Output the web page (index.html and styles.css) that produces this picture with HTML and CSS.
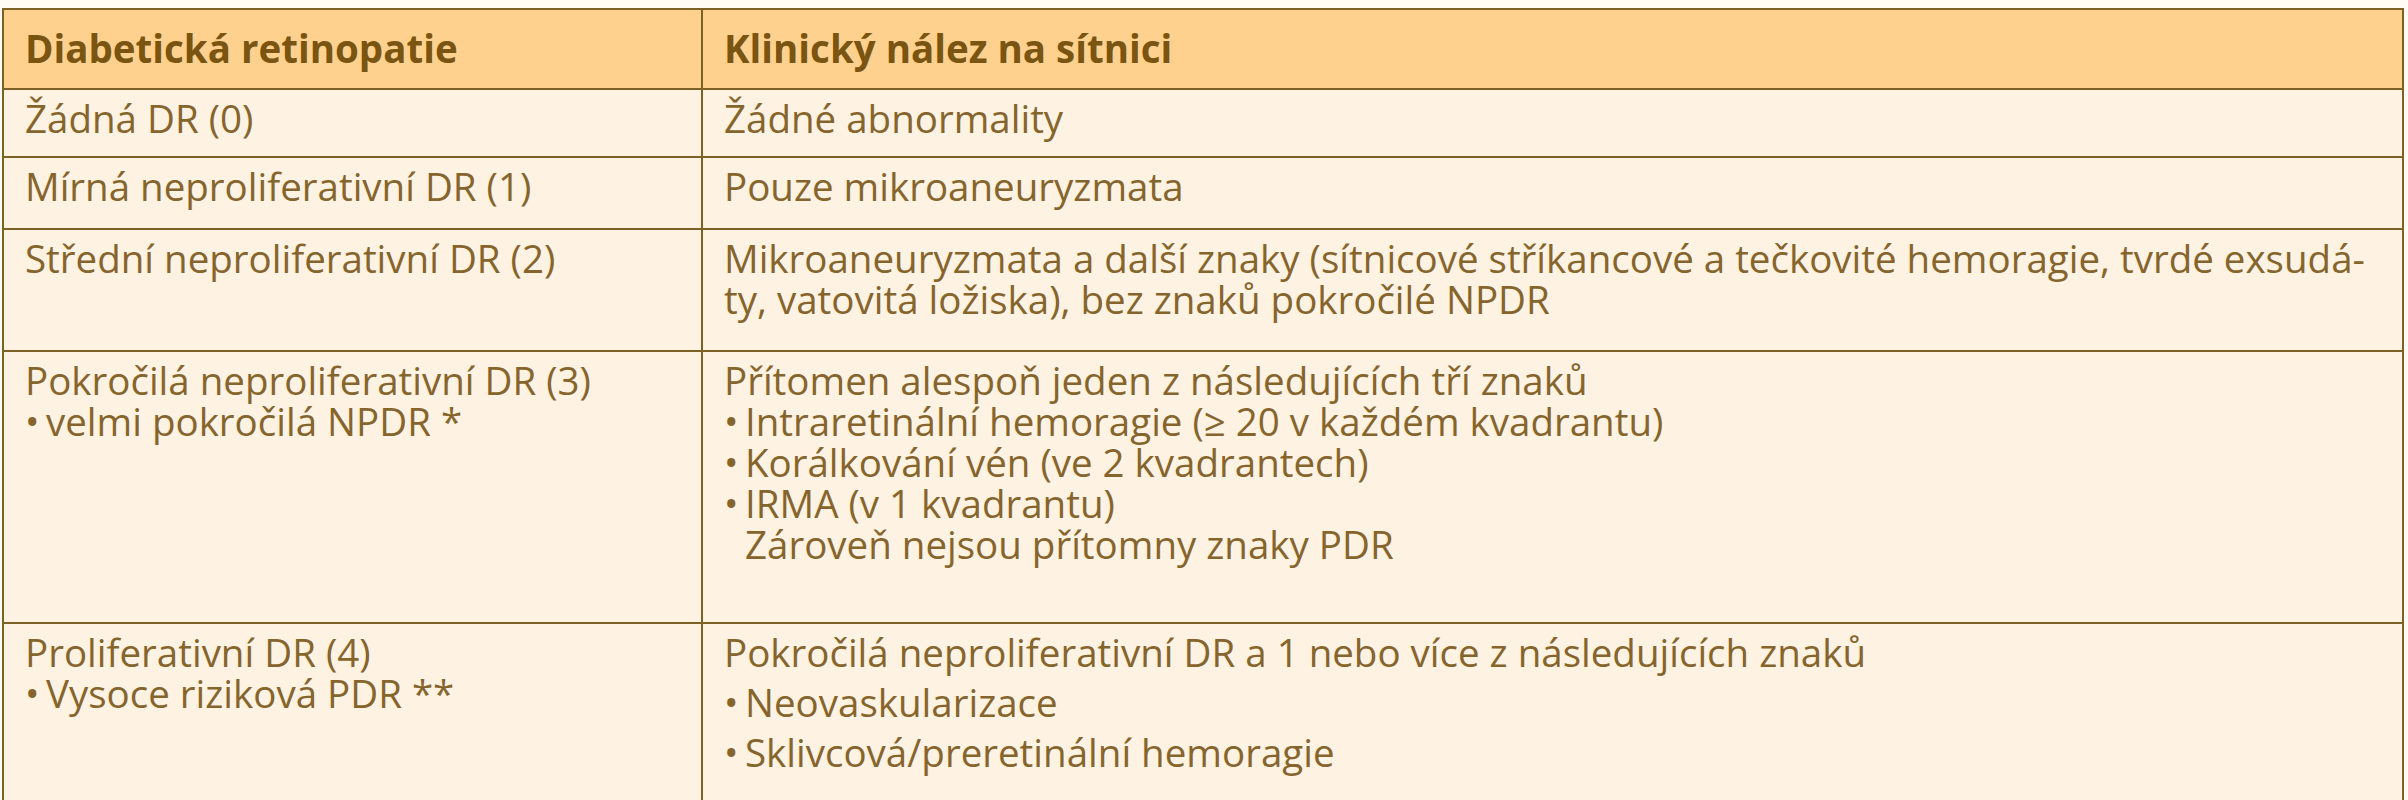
FILE: index.html
```html
<!DOCTYPE html>
<html lang="cs">
<head>
<meta charset="utf-8">
<title>Diabetická retinopatie</title>
<link rel="stylesheet" href="styles.css">
</head>
<body>
<table class="dr-table">
  <colgroup>
    <col class="col-a">
    <col class="col-b">
  </colgroup>
  <thead>
    <tr class="row-head">
      <th>Diabetická retinopatie</th>
      <th>Klinický nález na sítnici</th>
    </tr>
  </thead>
  <tbody>
    <tr class="row-r1">
      <td>Žádná DR (0)</td>
      <td>Žádné abnormality</td>
    </tr>
    <tr class="row-r2">
      <td>Mírná neproliferativní DR (1)</td>
      <td>Pouze mikroaneuryzmata</td>
    </tr>
    <tr class="row-r3">
      <td>Střední neproliferativní DR (2)</td>
      <td>
        <div class="line">Mikroaneuryzmata a další znaky (sítnicové stříkancové a tečkovité hemoragie, tvrdé exsudá-</div>
        <div class="line">ty, vatovitá ložiska), bez znaků pokročilé NPDR</div>
      </td>
    </tr>
    <tr class="row-r4">
      <td>
        <div class="line">Pokročilá neproliferativní DR (3)</div>
        <div class="line"><span class="dot">•</span>velmi pokročilá NPDR *</div>
      </td>
      <td>
        <div class="line">Přítomen alespoň jeden z následujících tří znaků</div>
        <div class="line"><span class="dot">•</span>Intraretinální hemoragie (≥ 20 v každém kvadrantu)</div>
        <div class="line"><span class="dot">•</span>Korálkování vén (ve 2 kvadrantech)</div>
        <div class="line"><span class="dot">•</span>IRMA (v 1 kvadrantu)</div>
        <div class="line cont">Zároveň nejsou přítomny znaky PDR</div>
      </td>
    </tr>
    <tr class="row-r5">
      <td>
        <div class="line">Proliferativní DR (4)</div>
        <div class="line"><span class="dot">•</span>Vysoce riziková PDR **</div>
      </td>
      <td>
        <div class="line">Pokročilá neproliferativní DR a 1 nebo více z následujících znaků</div>
        <div class="line spaced"><span class="dot">•</span>Neovaskularizace</div>
        <div class="line spaced"><span class="dot">•</span>Sklivcová/preretinální hemoragie</div>
      </td>
    </tr>
  </tbody>
</table>
</body>
</html>
```

FILE: styles.css
```css
html, body {
  margin: 0;
  padding: 0;
  background: #fffcf6;
}

body {
  padding: 8px 0 0 2px;
  font-family: "Open Sans", "Noto Sans", "DejaVu Sans", sans-serif;
  font-size: 38.5px;
  line-height: 41px;
  color: #86652d;
}

.dr-table {
  border-collapse: separate;
  border-spacing: 0;
  width: 2402px;
  table-layout: fixed;
  border-top: 2px solid #7d6226;
  border-left: 2px solid #7d6226;
  background: #fef2e2;
}

.col-a { width: 699px; }
.col-b { width: 1701px; }

.dr-table th,
.dr-table td {
  box-sizing: border-box;
  border-right: 2px solid #7d6226;
  border-bottom: 2px solid #7d6226;
  padding: 8px 20px 0 21px;
  text-align: left;
  vertical-align: top;
  white-space: nowrap;
}

.dr-table th {
  background: #fed28e;
  color: #7a5411;
  font-weight: 700;
  padding-top: 18px;
  height: 80px;
}

.row-r1 td { height: 68px; }
.row-r2 td { height: 72px; }
.row-r3 td { height: 122px; }
.row-r4 td { height: 272px; }
.row-r5 td { height: 260px; }

.line {
  display: block;
}

.dot {
  display: inline-block;
  width: 21px;
}

.cont {
  padding-left: 21px;
}

.spaced {
  margin-top: 9px;
}
```
